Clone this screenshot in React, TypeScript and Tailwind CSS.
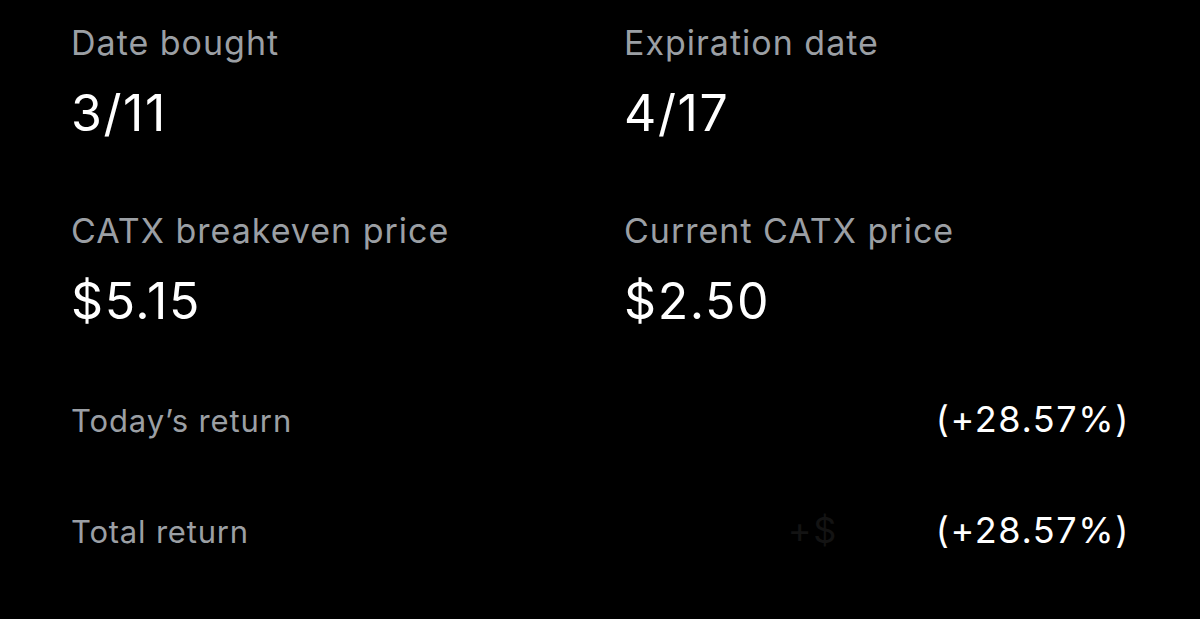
import React from "react";

const font = { fontFamily: "Inter, 'Noto Sans', sans-serif" };

function Field({ label, value }: { label: string; value: string }) {
  return (
    <div className="flex flex-col">
      <div className="text-[34px] leading-[40px] tracking-[1px] text-[#9b9fa4]">{label}</div>
      <div className="mt-[22px] text-[50px] leading-[56px] tracking-[1.6px] text-white">{value}</div>
    </div>
  );
}

export default function App() {
  return (
    <div className="w-[1200px] h-[619px] bg-black overflow-hidden" style={font}>
      <div className="pl-[71px] pr-[70px] pt-[23px]">
        <div className="grid grid-cols-[553px_1fr] gap-y-[70px]">
          <Field label="Date bought" value="3/11" />
          <Field label="Expiration date" value="4/17" />
          <Field label="CATX breakeven price" value="$5.15" />
          <Field label="Current CATX price" value="$2.50" />
        </div>
        <div className="mt-[68px] flex flex-col gap-[65px]">
          <div className="flex items-baseline justify-between leading-[44px]">
            <span className="text-[31px] tracking-[0.9px] text-[#9b9fa4]">Today’s return</span>
            <span className="text-[36px] tracking-[1.6px] text-white">(+28.57%)</span>
          </div>
          <div className="flex items-baseline justify-between leading-[44px]">
            <span className="text-[31px] tracking-[0.8px] text-[#9b9fa4]">Total return</span>
            <span className="flex items-baseline text-[36px] tracking-[1.6px]">
              <span className="text-[#131313] mr-[98px]">+$</span>
              <span className="text-white">(+28.57%)</span>
            </span>
          </div>
        </div>
      </div>
    </div>
  );
}
